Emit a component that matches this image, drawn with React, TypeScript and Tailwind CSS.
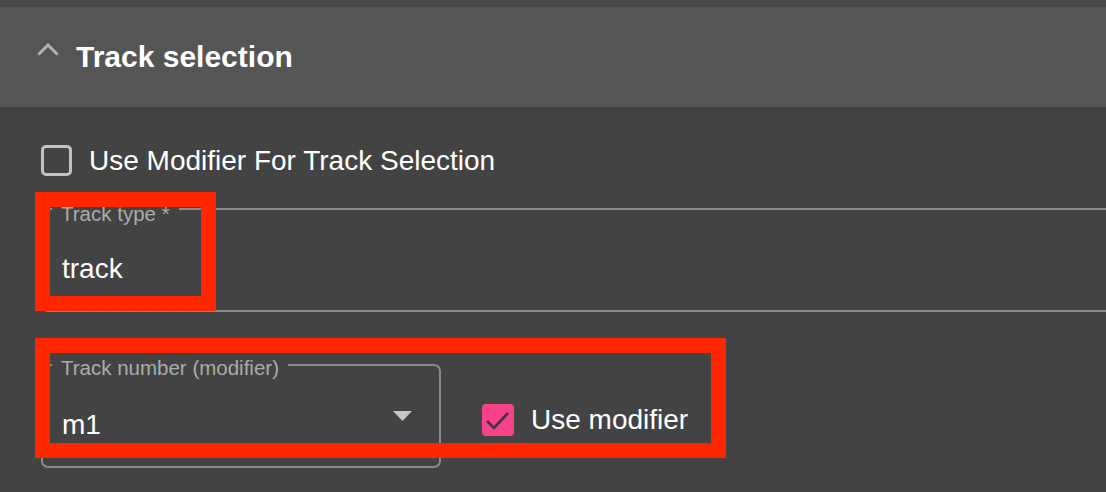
import { useState } from 'react'

const font = { fontFamily: '"Liberation Sans", Arial, Helvetica, sans-serif' }

function OutlinedField({
  label,
  className,
  labelTop,
  children,
}: {
  label: string
  className: string
  labelTop: string
  children: React.ReactNode
}) {
  return (
    <div className={`relative border-2 border-[#8a8a8a] rounded-[7px] h-[104px] ${className}`}>
      <span
        className={`absolute left-[9px] px-[9px] bg-[#434343] text-[20.5px] leading-none text-[#ababab] whitespace-nowrap ${labelTop}`}
      >
        {label}
      </span>
      {children}
    </div>
  )
}

export default function App() {
  const [useModForTrack, setUseModForTrack] = useState(false)
  const [useModifier, setUseModifier] = useState(true)

  return (
    <div className="relative w-[1106px] h-[492px] overflow-hidden bg-[#434343]" style={font}>
      <div className="h-[7px] bg-[#474747]" />

      {/* accordion header */}
      <div className="h-[100px] bg-[#555555] flex items-center pl-[37px]">
        <svg width="22" height="14" viewBox="0 0 22 14" className="mb-[17px] shrink-0">
          <polyline points="1.5,12.5 11,3 20.5,12.5" fill="none" stroke="#b4b4b4" strokeWidth="3" />
        </svg>
        <h2 className="ml-[17px] text-[30px] leading-none font-bold text-white">Track selection</h2>
      </div>

      {/* body */}
      <div className="pl-[41px]">
        <label
          className="mt-[38px] flex items-center gap-[17px] cursor-pointer"
          onClick={() => setUseModForTrack(!useModForTrack)}
        >
          <span className="w-[31px] h-[31px] rounded-[5px] border-[3px] border-[#c2c2c2]" />
          <span className="text-[28px] leading-none text-white">Use Modifier For Track Selection</span>
        </label>

        <OutlinedField label="Track type *" className="mt-[32px] w-[1100px]" labelTop="top-[-6px]">
          <div className="pl-[19px] pt-[45px] text-[28px] leading-none text-white">track</div>
        </OutlinedField>

        <div className="mt-[52px] flex items-center">
          <OutlinedField label="Track number (modifier)" className="w-[400px]" labelTop="top-[-8px]">
            <div className="flex justify-between items-start pl-[19px] pr-[27px] pt-[44px]">
              <span className="mt-[1px] text-[28px] leading-none text-white">m1</span>
              <svg width="19" height="10" viewBox="0 0 19 10" className="mt-[1px]">
                <polygon points="0,0 19,0 9.5,10" fill="#c6c6c6" />
              </svg>
            </div>
          </OutlinedField>

          <label
            className="ml-[41px] mt-[7px] flex items-center gap-[17px] cursor-pointer"
            onClick={() => setUseModifier(!useModifier)}
          >
            {useModifier ? (
              <svg width="32" height="32" viewBox="0 0 32 32">
                <rect width="32" height="32" rx="4" fill="#f7428a" />
                <polyline points="5,17 12,24 26,9" fill="none" stroke="#3a3a3a" strokeWidth="2.6" />
              </svg>
            ) : (
              <span className="w-[32px] h-[32px] rounded-[5px] border-[3px] border-[#c2c2c2]" />
            )}
            <span className="text-[28px] leading-none text-white">Use modifier</span>
          </label>
        </div>
      </div>

      {/* annotation boxes */}
      <div className="absolute left-[35px] top-[192px] w-[181px] h-[119px] border-[15px] border-[#ff2600] pointer-events-none" />
      <div className="absolute left-[35px] top-[338px] w-[691px] h-[120px] border-[15px] border-[#ff2600] pointer-events-none" />
    </div>
  )
}
